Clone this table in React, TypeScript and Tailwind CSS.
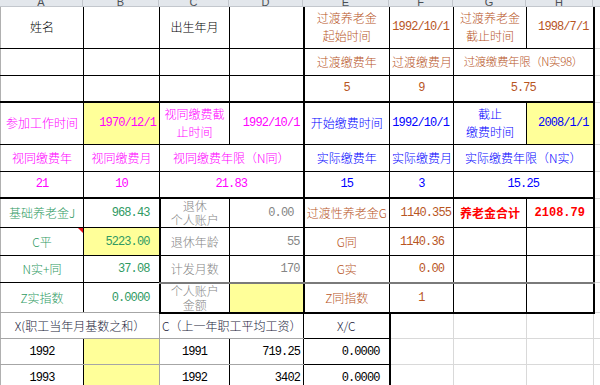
import clsx from 'clsx';
import { twMerge } from 'tailwind-merge';
import type { ReactNode } from 'react';

const widths = [83, 76, 70, 74, 86, 64, 73, 67, 60];
const letters = ['A', 'B', 'C', 'D', 'E', 'F', 'G', 'H', 'I'];

// text colours as they show in the sheet
const mag = 'text-[#ff00ff]';
const brn = 'text-[#b8561f]';
const blu = 'text-[#0000ff]';
const grn = 'text-[#2f9a63]';
const gry = 'text-[#858585]';
const red = 'text-[#ff0000] font-bold';
const ink = 'text-[#1b1b3a]';
const yel = 'bg-[#ffff99]';

type TdProps = {
  children?: ReactNode;
  className?: string;
  span?: number;
  num?: boolean;
};

function Td({ children, className, span, num }: TdProps) {
  return (
    <td
      colSpan={span}
      className={twMerge(
        clsx(
          'border border-black p-0 px-[2px] text-center align-middle whitespace-nowrap leading-[15px]',
          num
            ? "font-[family-name:'Liberation_Mono','Noto_Sans_CJK_SC',monospace] text-[12px] tracking-[-0.9px]"
            : "font-[family-name:'Noto_Sans_CJK_SC',sans-serif] text-[12px] font-light",
          className
        )
      )}
    >
      {children}
    </td>
  );
}

// empty grid cells outside the bordered form
const Grid = ({ className }: { className?: string }) => (
  <td className={clsx('border border-[#d9d9d9] p-0', className)} />
);

const left = 'border-l-[#b0b0b0]';

export default function App() {
  return (
    <div className="w-[600px] h-[385px] overflow-hidden bg-white text-black">
      <div className="flex h-[7px] bg-[#e3e7ec] border-b border-[#c3c7cd]">
        {letters.map((l, i) => (
          <div
            key={l}
            style={{ width: widths[i] }}
            className="shrink-0 h-full overflow-hidden border-r border-[#c3c7cd] flex items-end justify-center font-[family-name:'Liberation_Sans',sans-serif] text-[11px] leading-[8px] text-[#4b4f55]"
          >
            {l}
          </div>
        ))}
      </div>

      <table className="border-collapse table-fixed w-[653px]">
        <colgroup>
          {widths.map((w, i) => (
            <col key={i} style={{ width: w }} />
          ))}
        </colgroup>
        <tbody>
          <tr className="h-[41px]">
            <Td className={clsx(left, 'border-t-0')}>姓名</Td>
            <Td className="border-t-0" />
            <Td className="border-t-0">出生年月</Td>
            <Td className="border-t-0" />
            <Td className={clsx(brn, 'border-t-0 border-l-2')}>过渡养老金<br />起始时间</Td>
            <Td num className={clsx(brn, 'border-t-0 text-right pr-[4px]')}>1992/10/1</Td>
            <Td className={clsx(brn, 'border-t-0')}>过渡养老金<br />截止时间</Td>
            <Td num className={clsx(brn, 'border-t-0 border-r-2 text-right pr-[4px]')}>1998/7/1</Td>
            <Grid className="border-t-0" />
          </tr>
          <tr className="h-[27px]">
            <Td className={left} />
            <Td />
            <Td />
            <Td />
            <Td className={clsx(brn, 'border-l-2')}>过渡缴费年</Td>
            <Td className={brn}>过渡缴费月</Td>
            <Td span={2} className={clsx(brn, 'border-r-2 text-[11.5px] tracking-[-0.4px]')}>
              过渡缴费年限（N实98）
            </Td>
            <Grid />
          </tr>
          <tr className="h-[27px]">
            <Td className={clsx(left, 'border-b-2')} />
            <Td className="border-b-2" />
            <Td className="border-b-2" />
            <Td className="border-b-2" />
            <Td num className={clsx(brn, 'border-l-2 border-b-2')}>5</Td>
            <Td num className={clsx(brn, 'border-b-2')}>9</Td>
            <Td num span={2} className={clsx(brn, 'border-r-2 border-b-2')}>5.75</Td>
            <Grid />
          </tr>

          <tr className="h-[42px]">
            <Td className={clsx(left, mag)}>参加工作时间</Td>
            <Td num className={clsx(mag, yel, 'text-right pr-[3px]')}>1970/12/1</Td>
            <Td className={mag}>视同缴费截<br />止时间</Td>
            <Td num className={clsx(mag, 'text-right pr-[3px]')}>1992/10/1</Td>
            <Td className={clsx(blu, 'border-l-2')}>开始缴费时间</Td>
            <Td num className={clsx(blu, 'text-right pr-[4px]')}>1992/10/1</Td>
            <Td className={blu}>截止<br />缴费时间</Td>
            <Td num className={clsx(blu, yel, 'border-r-2 text-right pr-[4px]')}>2008/1/1</Td>
            <Grid />
          </tr>
          <tr className="h-[27px]">
            <Td className={clsx(left, mag)}>视同缴费年</Td>
            <Td className={mag}>视同缴费月</Td>
            <Td span={2} className={mag}>视同缴费年限（N同）</Td>
            <Td className={clsx(blu, 'border-l-2')}>实际缴费年</Td>
            <Td className={blu}>实际缴费月</Td>
            <Td span={2} className={clsx(blu, 'border-r-2')}>实际缴费年限（N实）</Td>
            <Grid />
          </tr>
          <tr className="h-[27px]">
            <Td num className={clsx(left, mag, 'border-b-2')}>21</Td>
            <Td num className={clsx(mag, 'border-b-2')}>10</Td>
            <Td num span={2} className={clsx(mag, 'border-b-2')}>21.83</Td>
            <Td num className={clsx(blu, 'border-l-2 border-b-2')}>15</Td>
            <Td num className={clsx(blu, 'border-b-2')}>3</Td>
            <Td num span={2} className={clsx(blu, 'border-r-2 border-b-2')}>15.25</Td>
            <Grid />
          </tr>

          <tr className="h-[28px]">
            <Td className={clsx(left, grn)}>基础养老金J</Td>
            <Td num className={clsx(grn, 'text-right pr-[9px]')}>968.43</Td>
            <Td className={clsx(gry, 'border-l-2 leading-[14px]')}>退休<br />个人账户</Td>
            <Td num className={clsx(gry, 'text-right pr-[9px]')}>0.00</Td>
            <Td className={clsx(brn, 'border-l-2')}>过渡性养老金G</Td>
            <Td num className={clsx(brn, 'text-right pr-[2px]')}>1140.355</Td>
            <Td className={red}>养老金合计</Td>
            <Td num className={clsx(red, 'border-r-2 tracking-[0px]')}>2108.79</Td>
            <Grid />
          </tr>
          <tr className="h-[28px]">
            <Td className={clsx(left, grn, 'relative')}>
              C平
              <span className="absolute top-0 right-0 w-0 h-0 border-t-[5px] border-l-[5px] border-t-[#e8101a] border-l-transparent" />
            </Td>
            <Td num className={clsx(grn, yel, 'text-right pr-[9px]')}>5223.00</Td>
            <Td className={clsx(gry, 'border-l-2')}>退休年龄</Td>
            <Td num className={clsx(gry, 'text-right pr-[3px]')}>55</Td>
            <Td className={clsx(brn, 'border-l-2')}>G同</Td>
            <Td num className={clsx(brn, 'text-right pr-[9px]')}>1140.36</Td>
            <Td />
            <Td className="border-r-2" />
            <Grid />
          </tr>
          <tr className="h-[27px]">
            <Td className={clsx(left, grn)}>N实+同</Td>
            <Td num className={clsx(grn, 'text-right pr-[9px]')}>37.08</Td>
            <Td className={clsx(gry, 'border-l-2 border-b-2 border-b-[#7a7a7a]')}>计发月数</Td>
            <Td num className={clsx(gry, 'text-right pr-[3px] border-b-2 border-b-[#7a7a7a]')}>170</Td>
            <Td className={clsx(brn, 'border-l-2 border-b-2 border-b-[#7a7a7a]')}>G实</Td>
            <Td num className={clsx(brn, 'text-right pr-[9px] border-b-2 border-b-[#7a7a7a]')}>0.00</Td>
            <Td className="border-b-2 border-b-[#7a7a7a]" />
            <Td className="border-r-2 border-b-2 border-b-[#7a7a7a]" />
            <Grid />
          </tr>
          <tr className="h-[28px]">
            <Td className={clsx(left, grn, 'border-b-[#a6a6a6]')}>Z实指数</Td>
            <Td num className={clsx(grn, 'text-right pr-[9px] border-b-[#a6a6a6]')}>0.0000</Td>
            <Td className={clsx(gry, 'border-l-2 border-b-2 leading-[14px]')}>个人账户<br />金额</Td>
            <Td className={clsx(yel, 'border-b-2')} />
            <Td className={clsx(brn, 'border-l-2 border-b-2')}>Z同指数</Td>
            <Td num className={clsx(brn, 'border-b-2')}>1</Td>
            <Td className="border-b-2" />
            <Td className="border-r-2 border-b-2" />
            <Grid />
          </tr>

          <tr className="h-[26px]">
            <Td span={2} className={clsx(left, ink, 'border-b-[#a6a6a6] border-r-[#a6a6a6]')}>X(职工当年月基数之和）</Td>
            <Td span={2} className={clsx(ink, 'border-b-[#a6a6a6]')}>C（上一年职工平均工资）</Td>
            <Td className={clsx(ink, 'border-r-2')}>X/C</Td>
            <Grid />
            <Grid />
            <Grid />
            <Grid />
          </tr>
          <tr className="h-[26px]">
            <Td num className={clsx(left, 'border-b-[#a6a6a6]')}>1992</Td>
            <Td className={clsx(yel, 'border-b-[#a6a6a6] border-r-[#a6a6a6]')} />
            <Td num className="border-b-[#a6a6a6]">1991</Td>
            <Td num className="text-right pr-[3px] border-b-[#a6a6a6]">719.25</Td>
            <Td num className="border-r-2 text-right pr-[9px]">0.0000</Td>
            <Grid />
            <Grid />
            <Grid />
            <Grid />
          </tr>
          <tr className="h-[26px]">
            <Td num className={clsx(left, 'border-b-[#a6a6a6]')}>1993</Td>
            <Td className={clsx(yel, 'border-b-[#a6a6a6] border-r-[#a6a6a6]')} />
            <Td num className="border-b-[#a6a6a6]">1992</Td>
            <Td num className="text-right pr-[3px] border-b-[#a6a6a6]">3402</Td>
            <Td num className="border-r-2 text-right pr-[9px]">0.0000</Td>
            <Grid />
            <Grid />
            <Grid />
            <Grid />
          </tr>
        </tbody>
      </table>
    </div>
  );
}
